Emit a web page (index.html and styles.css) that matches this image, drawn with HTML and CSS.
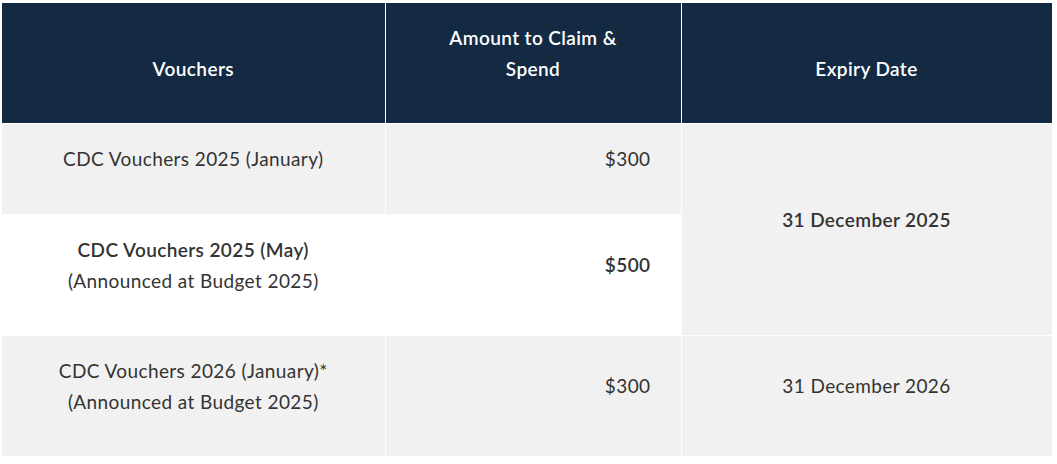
FILE: index.html
```html
<!DOCTYPE html>
<html>
<head>
<meta charset="utf-8">
<link rel="stylesheet" href="styles.css">
</head>
<body>
<table class="vtable">
  <colgroup>
    <col class="c1"><col class="c2"><col class="c3">
  </colgroup>
  <thead>
    <tr class="head">
      <th>Vouchers</th>
      <th>Amount to Claim &amp;<br>Spend</th>
      <th>Expiry Date</th>
    </tr>
  </thead>
  <tbody>
    <tr class="r1 gray">
      <td class="name">CDC Vouchers 2025 (January)</td>
      <td class="amt">$300</td>
      <td class="exp strong" rowspan="2">31 December 2025</td>
    </tr>
    <tr class="r2 white">
      <td class="name"><span class="strong">CDC Vouchers 2025 (May)</span><br>(Announced at Budget 2025)</td>
      <td class="amt strong">$500</td>
    </tr>
    <tr class="r3 gray">
      <td class="name">CDC Vouchers 2026 (January)*<br>(Announced at Budget 2025)</td>
      <td class="amt">$300</td>
      <td class="exp">31 December 2026</td>
    </tr>
  </tbody>
</table>
</body>
</html>
```
FILE: styles.css
```css
html, body {
  margin: 0;
  background: #fff;
}
body {
  padding: 3px 5px 0 2px;
  font-family: "Lato", "Liberation Sans", sans-serif;
}
.vtable {
  border-collapse: collapse;
  width: 1050px;
  table-layout: fixed;
  font-size: 19px;
  letter-spacing: 0.4px;
  line-height: 31px;
  color: #333;
}
.c1 { width: 383px; }
.c2 { width: 296px; }
.c3 { width: 371px; }
.vtable th, .vtable td {
  border: 1px solid #fff;
  padding: 0 0 20px 0;
  vertical-align: middle;
}
.vtable th {
  background: #142a43;
  color: #fff;
  font-weight: 600;
  text-align: center;
  vertical-align: bottom;
  padding-bottom: 39px;
}
.head { height: 120px; }
.vtable tr:first-child th { border-top: none; }
.vtable th:first-child, .vtable td:first-child { border-left: none; }
.gray td { background: #f1f1f1; }
.white td { background: #fff; }
.white td.exp { background: #f1f1f1; }
.r1 { height: 91px; }
.r2 { height: 121px; }
.r3 { height: 121px; }
.name { text-align: center; }
.vtable td.amt { text-align: right; padding-right: 30px; }
.exp { text-align: center; background: #f1f1f1; }
.strong { font-weight: 600; }
```
